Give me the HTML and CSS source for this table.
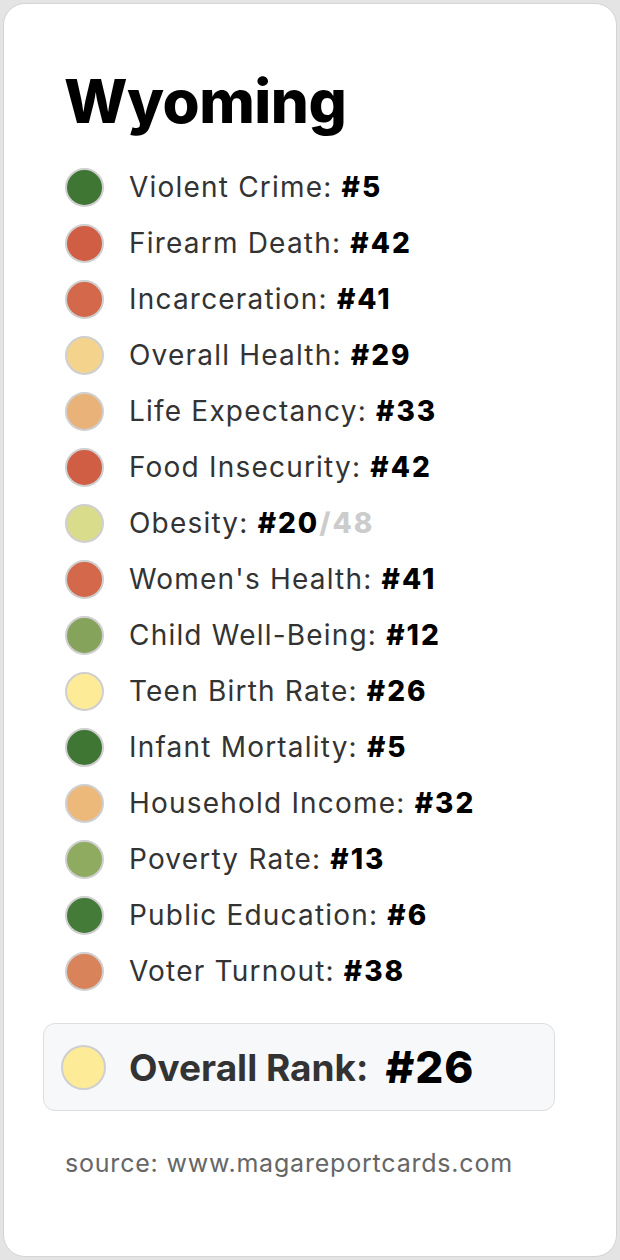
FILE: index.html
```html
<!DOCTYPE html>
<html lang="en">
<head>
<meta charset="utf-8">
<title>Wyoming</title>
<link rel="stylesheet" href="styles.css">
</head>
<body>
<div class="card">
  <h1 class="title">Wyoming</h1>
  <ul class="list">
    <li class="row"><span class="dot c-green"></span><span class="label">Violent Crime: <b>#5</b></span></li>
    <li class="row"><span class="dot c-red"></span><span class="label">Firearm Death: <b>#42</b></span></li>
    <li class="row"><span class="dot c-red2"></span><span class="label">Incarceration: <b>#41</b></span></li>
    <li class="row"><span class="dot c-sand"></span><span class="label">Overall Health: <b>#29</b></span></li>
    <li class="row"><span class="dot c-peach"></span><span class="label">Life Expectancy: <b>#33</b></span></li>
    <li class="row"><span class="dot c-red"></span><span class="label">Food Insecurity: <b>#42</b></span></li>
    <li class="row"><span class="dot c-lime"></span><span class="label">Obesity: <b>#20</b><b class="of">/48</b></span></li>
    <li class="row"><span class="dot c-red2"></span><span class="label">Women's Health: <b>#41</b></span></li>
    <li class="row"><span class="dot c-olive"></span><span class="label">Child Well-Being: <b>#12</b></span></li>
    <li class="row"><span class="dot c-yellow"></span><span class="label">Teen Birth Rate: <b>#26</b></span></li>
    <li class="row"><span class="dot c-green"></span><span class="label">Infant Mortality: <b>#5</b></span></li>
    <li class="row"><span class="dot c-peach2"></span><span class="label">Household Income: <b>#32</b></span></li>
    <li class="row"><span class="dot c-olive2"></span><span class="label">Poverty Rate: <b>#13</b></span></li>
    <li class="row"><span class="dot c-green2"></span><span class="label">Public Education: <b>#6</b></span></li>
    <li class="row"><span class="dot c-orange"></span><span class="label">Voter Turnout: <b>#38</b></span></li>
  </ul>
  <div class="overall">
    <span class="dot big c-yellow"></span>
    <span class="overall-label">Overall Rank:</span>
    <span class="overall-num">#26</span>
  </div>
  <p class="source">source: www.magareportcards.com</p>
</div>
</body>
</html>
```
FILE: styles.css
```css
html, body {
  margin: 0;
  padding: 0;
}
body {
  background: #e4e4e4;
  padding: 3px;
  font-family: Inter, "Noto Sans", "Liberation Sans", sans-serif;
}
.card {
  box-sizing: border-box;
  height: 1254px;
  background: #ffffff;
  border: 1px solid #d4d4d4;
  border-radius: 22px;
  padding: 0 39px;
}
.title {
  margin: 61px 0 0 21px;
  font-size: 60px;
  line-height: 72px;
  font-weight: 800;
  color: #000;
  letter-spacing: -0.5px;
}
.list {
  list-style: none;
  margin: 22px 0 0 0;
  padding: 0 0 0 22px;
}
.row {
  display: flex;
  align-items: center;
  height: 56px;
  gap: 25px;
}
.dot {
  box-sizing: border-box;
  flex: none;
  width: 39px;
  height: 39px;
  border-radius: 50%;
  border: 2px solid #cfcfcf;
}
.label {
  font-size: 28px;
  letter-spacing: 1.2px;
  color: #333333;
}
.label b {
  font-weight: 800;
  letter-spacing: 2px;
  color: #000;
}
.label b.of {
  color: #cccccc;
}
.overall {
  box-sizing: border-box;
  display: flex;
  align-items: center;
  width: 512px;
  height: 88px;
  margin-top: 24px;
  padding-left: 17px;
  background: #f7f8fa;
  border: 1px solid #dddddd;
  border-radius: 12px;
}
.dot.big {
  width: 45px;
  height: 45px;
  margin-right: 23px;
}
.overall-label {
  font-size: 37px;
  font-weight: 700;
  color: #333333;
  margin-right: 17px;
}
.overall-num {
  font-size: 44px;
  font-weight: 800;
  letter-spacing: 1px;
  color: #000;
}
.source {
  margin: 37px 0 0 22px;
  font-size: 25px;
  letter-spacing: 0.8px;
  color: #666666;
}
.c-green { background: #3f7634; }
.c-green2 { background: #447b38; }
.c-red { background: #cf5e44; }
.c-red2 { background: #d3684a; }
.c-sand { background: #f4d48c; }
.c-peach { background: #e9b279; }
.c-peach2 { background: #ecb97b; }
.c-lime { background: #d8dc8b; }
.c-olive { background: #86a35b; }
.c-olive2 { background: #8fab5f; }
.c-yellow { background: #fdeb98; }
.c-orange { background: #d9835a; }
```
